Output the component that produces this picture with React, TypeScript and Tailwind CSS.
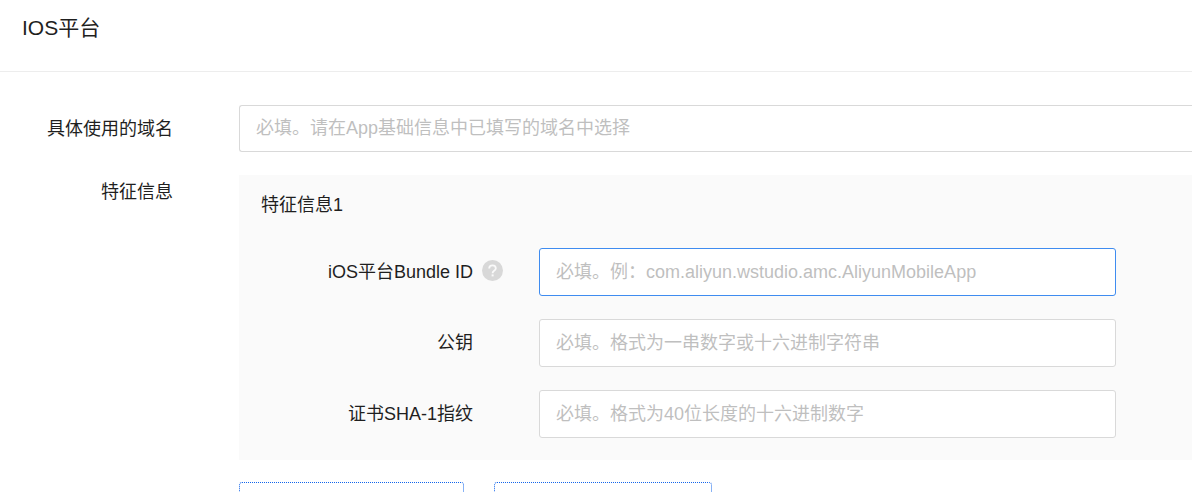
import type { ReactNode } from 'react';

const fieldClass =
  'block w-full rounded-[3px] border bg-white px-4 text-lg leading-6 text-[#1f1f1f] outline-none placeholder:text-[#bfbfbf] placeholder:opacity-100 focus:border-[#3f8cf0]';

function HelpIcon() {
  return (
    <svg viewBox="0 0 21 21" className="h-[21px] w-[21px]" aria-hidden="true">
      <circle cx="10.5" cy="10.5" r="10.5" fill="#d8d8d8" />
      <path
        d="M7.2 8.5C7.2 6.5 8.6 5.4 10.5 5.4s3.3 1.1 3.3 2.9c0 1.2-.8 1.9-1.7 2.5-1 .7-1.5 1.1-1.5 2.4"
        fill="none"
        stroke="#fafafa"
        strokeWidth="1.8"
      />
      <rect x="9.6" y="14.4" width="2" height="2" fill="#fafafa" />
    </svg>
  );
}

type FeatureFieldProps = {
  id: string;
  label: string;
  placeholder: string;
  active?: boolean;
  help?: ReactNode;
};

function FeatureField({ id, label, placeholder, active, help }: FeatureFieldProps) {
  return (
    <div className="flex items-center">
      <label htmlFor={id} className="w-[212px] shrink-0 text-right">
        {label}
      </label>
      <span className="w-[66px] shrink-0 pb-[3px] pl-[9px]">{help}</span>
      <input
        id={id}
        type="text"
        placeholder={placeholder}
        className={`${fieldClass} h-12 ${active ? 'border-[#3f8cf0]' : 'border-[#d9d9d9]'}`}
      />
    </div>
  );
}

export default function App() {
  return (
    <main className="h-screen overflow-hidden bg-white font-['Liberation_Sans','Noto_Sans_CJK_SC',sans-serif] text-lg leading-6 text-[#1f1f1f]">
      <header className="border-b border-[#ededed] px-[22px] pt-3 pb-[27px]">
        <h1 className="text-[21px] leading-8">IOS平台</h1>
      </header>

      <form className="flex flex-col pt-[33px]">
        <div className="flex items-center">
          <label htmlFor="domain" className="w-[173px] shrink-0 text-right">
            具体使用的域名
          </label>
          <div className="min-w-0 flex-1 pl-[66px]">
            <input
              id="domain"
              type="text"
              placeholder="必填。请在App基础信息中已填写的域名中选择"
              className={`${fieldClass} h-[47px] rounded-r-none border-r-0 border-[#d9d9d9]`}
            />
          </div>
        </div>

        <div className="mt-[23px] flex">
          <span id="feature-label" className="w-[173px] shrink-0 pt-[5px] text-right">
            特征信息
          </span>
          <div className="min-w-0 flex-1 pl-[66px]">
            <section
              aria-labelledby="feature-label"
              className="bg-[#fafafa] pt-[18px] pr-[76px] pb-[22px] pl-[22px]"
            >
              <h2>特征信息1</h2>
              <div className="mt-[31px] flex flex-col gap-[23px]">
                <FeatureField
                  id="bundle-id"
                  label="iOS平台Bundle ID"
                  placeholder="必填。例：com.aliyun.wstudio.amc.AliyunMobileApp"
                  active
                  help={
                    <button type="button" aria-label="帮助" className="block">
                      <HelpIcon />
                    </button>
                  }
                />
                <FeatureField
                  id="public-key"
                  label="公钥"
                  placeholder="必填。格式为一串数字或十六进制字符串"
                />
                <FeatureField
                  id="sha1"
                  label="证书SHA-1指纹"
                  placeholder="必填。格式为40位长度的十六进制数字"
                />
              </div>
            </section>
            <div className="mt-[22px] flex gap-[30px]">
              <button
                type="button"
                aria-label="添加特征信息"
                className="h-12 w-[225px] rounded-[3px] border border-dotted border-[#1366ec] bg-white"
              />
              <button
                type="button"
                aria-label="添加平台"
                className="h-12 w-[218px] rounded-[3px] border border-dotted border-[#1366ec] bg-white"
              />
            </div>
          </div>
        </div>
      </form>
    </main>
  );
}
